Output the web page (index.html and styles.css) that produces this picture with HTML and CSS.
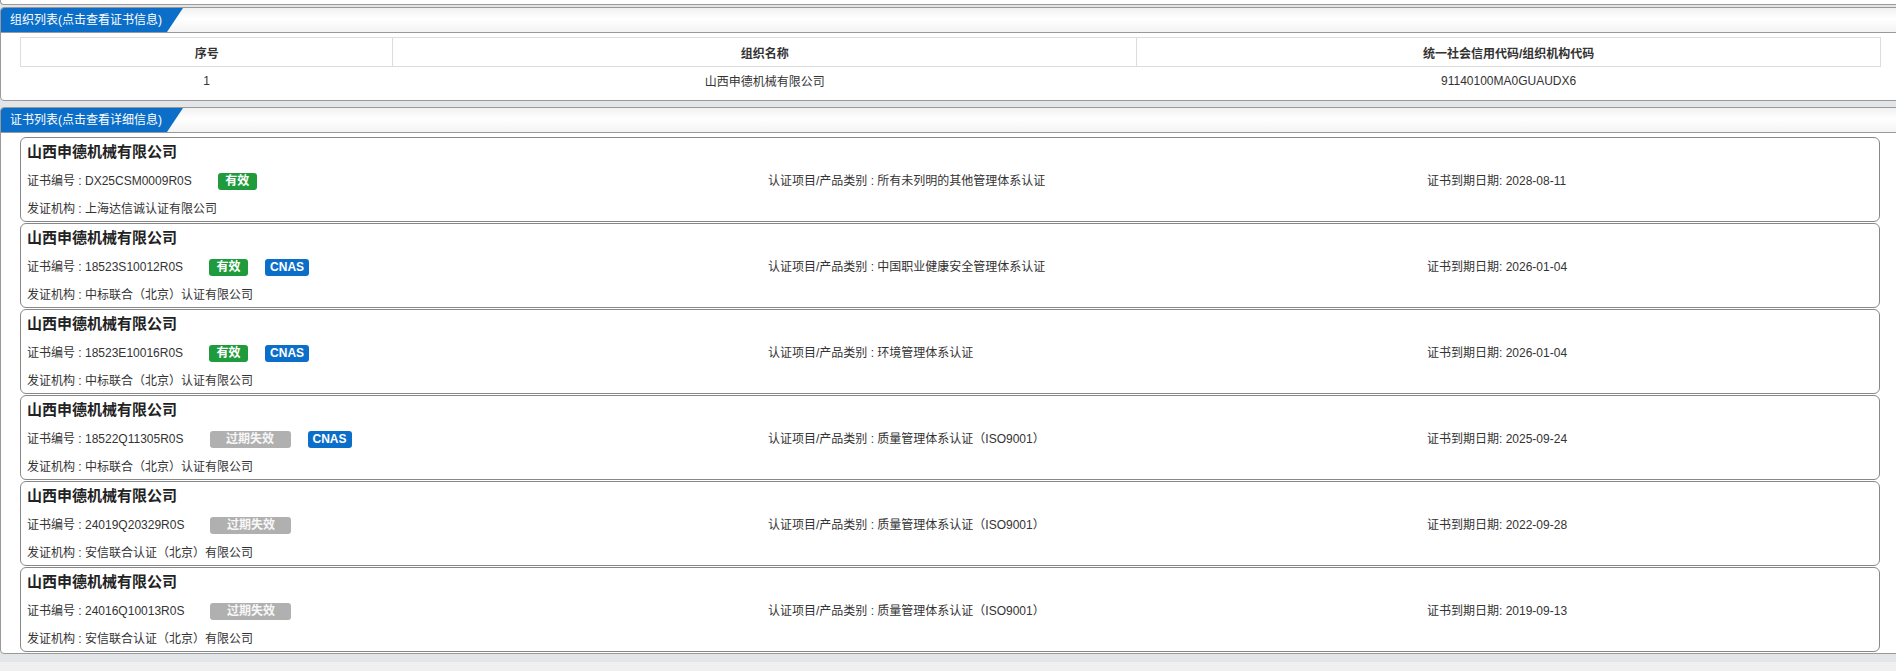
FILE: index.html
```html
<!DOCTYPE html>
<html lang="zh-CN">
<head>
<meta charset="utf-8">
<title>组织与证书列表</title>
<link rel="stylesheet" href="styles.css">
</head>
<body>
<div class="top-strip"></div>

<section class="panel panel-org">
  <div class="panel-head"><span class="tab">组织列表(点击查看证书信息)</span></div>
  <div class="panel-body">
    <table class="org-table">
      <thead>
        <tr><th class="c1">序号</th><th class="c2">组织名称</th><th class="c3">统一社会信用代码/组织机构代码</th></tr>
      </thead>
      <tbody>
        <tr><td>1</td><td>山西申德机械有限公司</td><td>91140100MA0GUAUDX6</td></tr>
      </tbody>
    </table>
  </div>
</section>

<section class="panel panel-cert">
  <div class="panel-head"><span class="tab">证书列表(点击查看详细信息)</span></div>
  <div class="cards">
    <div class="card">
      <div class="title">山西申德机械有限公司</div>
      <div class="row">
        <div class="cell">证书编号 : DX25CSM0009R0S<span class="badge ok">有效</span></div>
        <div class="cell">认证项目/产品类别 : 所有未列明的其他管理体系认证</div>
        <div class="cell">证书到期日期: 2028-08-11</div>
      </div>
      <div class="org">发证机构 : 上海达信诚认证有限公司</div>
    </div>
    <div class="card">
      <div class="title">山西申德机械有限公司</div>
      <div class="row">
        <div class="cell">证书编号 : 18523S10012R0S<span class="badge ok">有效</span><span class="badge cnas">CNAS</span></div>
        <div class="cell">认证项目/产品类别 : 中国职业健康安全管理体系认证</div>
        <div class="cell">证书到期日期: 2026-01-04</div>
      </div>
      <div class="org">发证机构 : 中标联合（北京）认证有限公司</div>
    </div>
    <div class="card">
      <div class="title">山西申德机械有限公司</div>
      <div class="row">
        <div class="cell">证书编号 : 18523E10016R0S<span class="badge ok">有效</span><span class="badge cnas">CNAS</span></div>
        <div class="cell">认证项目/产品类别 : 环境管理体系认证</div>
        <div class="cell">证书到期日期: 2026-01-04</div>
      </div>
      <div class="org">发证机构 : 中标联合（北京）认证有限公司</div>
    </div>
    <div class="card">
      <div class="title">山西申德机械有限公司</div>
      <div class="row">
        <div class="cell">证书编号 : 18522Q11305R0S<span class="badge expired">过期失效</span><span class="badge cnas">CNAS</span></div>
        <div class="cell">认证项目/产品类别 : 质量管理体系认证（ISO9001）</div>
        <div class="cell">证书到期日期: 2025-09-24</div>
      </div>
      <div class="org">发证机构 : 中标联合（北京）认证有限公司</div>
    </div>
    <div class="card">
      <div class="title">山西申德机械有限公司</div>
      <div class="row">
        <div class="cell">证书编号 : 24019Q20329R0S<span class="badge expired">过期失效</span></div>
        <div class="cell">认证项目/产品类别 : 质量管理体系认证（ISO9001）</div>
        <div class="cell">证书到期日期: 2022-09-28</div>
      </div>
      <div class="org">发证机构 : 安信联合认证（北京）有限公司</div>
    </div>
    <div class="card">
      <div class="title">山西申德机械有限公司</div>
      <div class="row">
        <div class="cell">证书编号 : 24016Q10013R0S<span class="badge expired">过期失效</span></div>
        <div class="cell">认证项目/产品类别 : 质量管理体系认证（ISO9001）</div>
        <div class="cell">证书到期日期: 2019-09-13</div>
      </div>
      <div class="org">发证机构 : 安信联合认证（北京）有限公司</div>
    </div>
  </div>
</section>

<div class="bottom-strip"></div>
</body>
</html>
```

FILE: styles.css
```css
html, body {
  margin: 0;
  padding: 0;
  overflow: hidden;
}
body {
  background: #e3e6e9;
  font-family: "Liberation Sans", "Noto Sans CJK SC", sans-serif;
  font-size: 12px;
  color: #333;
}
.top-strip {
  height: 4px;
  margin-right: -6px;
  background: #fff;
  border-left: 1px solid #999;
  border-bottom: 1px solid #999;
  border-bottom-left-radius: 4px;
  margin-bottom: 2px;
}
.panel {
  background: #fff;
  border: 1px solid #999;
  border-radius: 4px;
  margin-right: -4px;
  overflow: hidden;
}
.panel-org {
  margin-bottom: 6px;
}
.panel-head {
  height: 24px;
  border-bottom: 1px solid #999;
  background: linear-gradient(#f1f1f1, #ffffff 45%, #f3f3f3);
  display: flex;
}
.tab {
  display: flex;
  align-items: center;
  width: 182px;
  box-sizing: border-box;
  padding-left: 9px;
  height: 24px;
  background: #0b6ec8;
  color: #fff;
  line-height: 24px;
  clip-path: polygon(0 0, 182px 0, 166px 100%, 0 100%);
}
.panel-body {
  padding: 4px 18px 6px 19px;
}
.org-table {
  width: 100%;
  border-collapse: collapse;
  table-layout: fixed;
}
.org-table .c1 { width: 20%; }
.org-table .c2 { width: 40%; }
.org-table .c3 { width: 40%; }
.org-table th {
  border: 1px solid #ddd;
  height: 28px;
  padding: 0;
  font-weight: bold;
  text-align: center;
  color: #333;
}
.org-table td {
  height: 27px;
  padding: 0;
  text-align: center;
  color: #333;
}
.cards {
  padding: 4px 19px 1px 19px;
  display: flex;
  flex-direction: column;
  gap: 1px;
}
.card {
  height: 85px;
  box-sizing: border-box;
  border: 1px solid #888;
  border-radius: 6px;
  padding: 2px 6px 0 6px;
}
.title {
  font-size: 15px;
  font-weight: bold;
  line-height: 24px;
  color: #222;
}
.row {
  display: grid;
  grid-template-columns: 741px 659px 1fr;
  height: 34px;
  align-items: center;
}
.cell {
  display: flex;
  align-items: center;
  white-space: nowrap;
  line-height: 18px;
}
.org {
  line-height: 22px;
}
.badge {
  display: inline-block;
  height: 17px;
  line-height: 17px;
  border-radius: 3px;
  color: #fff;
  font-weight: bold;
  text-align: center;
  font-size: 12px;
}
.badge.ok {
  width: 39px;
  background: #1f9a3c;
  margin-left: 26px;
}
.badge.expired {
  width: 81px;
  background: #b0b0b0;
  color: #f7f7f7;
  margin-left: 26px;
}
.badge.cnas {
  width: 44px;
  background: #0b6ec8;
  margin-left: 17px;
}
.bottom-strip {
  margin-top: 8px;
  height: 9px;
  background: #f0f0f0;
}
```
